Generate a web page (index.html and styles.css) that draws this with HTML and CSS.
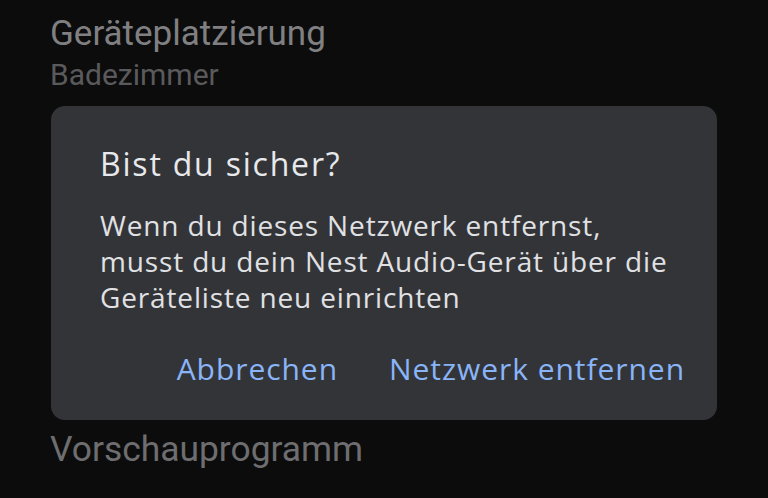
FILE: index.html
```html
<!DOCTYPE html>
<html lang="de">
<head>
<meta charset="utf-8">
<link rel="stylesheet" href="styles.css">
</head>
<body>
<div class="screen">
  <ul class="settings">
    <li class="item">
      <div class="item-title">Geräteplatzierung</div>
      <div class="item-sub">Badezimmer</div>
    </li>
    <li class="item item-last">
      <div class="item-title">Vorschauprogramm</div>
    </li>
  </ul>
  <div class="dialog" role="dialog">
    <h2 class="dialog-title">Bist du sicher?</h2>
    <p class="dialog-text">Wenn du dieses Netzwerk entfernst,<br>musst du dein Nest Audio-Gerät über die<br>Geräteliste neu einrichten</p>
    <div class="dialog-actions">
      <button class="btn">Abbrechen</button>
      <button class="btn">Netzwerk entfernen</button>
    </div>
  </div>
</div>
</body>
</html>
```

FILE: styles.css
```css
html, body {
  margin: 0;
  padding: 0;
  background: #0c0c0d;
}
.screen {
  position: relative;
  width: 768px;
  height: 498px;
  overflow: hidden;
  font-family: Roboto, "Liberation Sans", sans-serif;
}
.settings {
  list-style: none;
  margin: 0;
  padding: 14px 0 0 50px;
  display: flex;
  flex-direction: column;
}
.item {
  display: flex;
  flex-direction: column;
  gap: 4px;
}
.item-title {
  font-size: 35px;
  line-height: 40px;
  color: #808082;
}
.item-sub {
  font-size: 30px;
  line-height: 34px;
  color: #5a5a5c;
}
.item-last {
  margin-top: 337px;
}
.item-last .item-title {
  font-size: 35.4px;
  color: #6e6e70;
}
.dialog {
  position: absolute;
  left: 51px;
  top: 106px;
  width: 666px;
  height: 314px;
  box-sizing: border-box;
  padding: 38px 32px 0 49px;
  background: #333437;
  border-radius: 14px;
  display: flex;
  flex-direction: column;
}
.dialog-title {
  margin: 0;
  font-family: "Open Sans", Roboto, sans-serif;
  font-weight: 400;
  font-size: 32px;
  letter-spacing: 1.8px;
  line-height: 40px;
  color: #e8e9ec;
}
.dialog-text {
  margin: 23px 0 0;
  font-family: "Open Sans", Roboto, sans-serif;
  font-size: 28px;
  letter-spacing: 0.85px;
  line-height: 36px;
  color: #e0e1e4;
}
.dialog-actions {
  display: flex;
  justify-content: flex-end;
  gap: 51px;
  margin-top: 34px;
}
.btn {
  background: none;
  border: 0;
  padding: 0;
  font-family: "Open Sans", Roboto, sans-serif;
  font-weight: 500;
  font-size: 30px;
  letter-spacing: 0.95px;
  line-height: 40px;
  color: #8ab4f8;
}
```
